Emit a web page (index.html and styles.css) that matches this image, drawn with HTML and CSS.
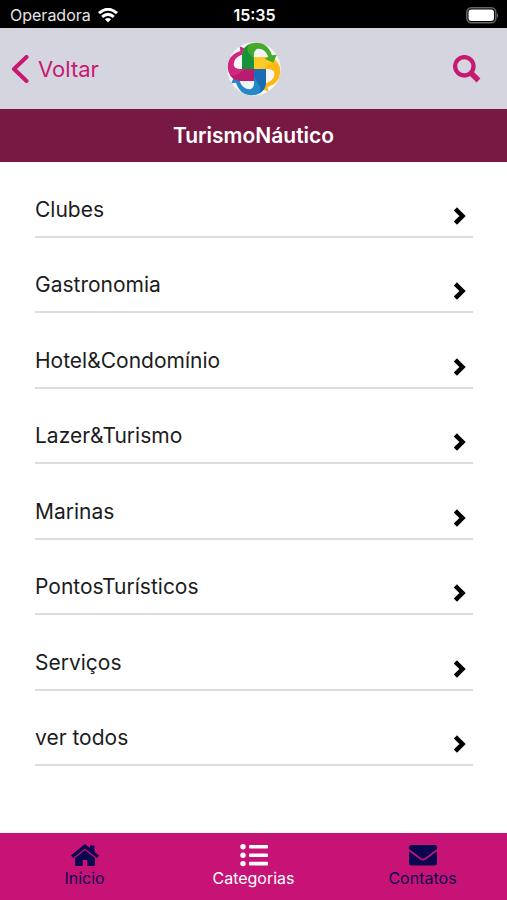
FILE: index.html
```html
<!DOCTYPE html>
<html lang="pt-BR">
<head>
<meta charset="utf-8">
<meta name="viewport" content="width=device-width, initial-scale=1">
<title>TurismoNáutico</title>
<link rel="stylesheet" href="styles.css">
</head>
<body>
<div class="status">
  <div class="carrier">Operadora
    <svg width="20" height="15" viewBox="0 0 20 15" fill="none" stroke="#fff" stroke-width="3" aria-hidden="true"><path d="M1 5.200Q10-2.600 19 5.200"/><path d="M4.200 8.800Q10 4 15.800 8.800"/><path d="M6.900 11.200Q10 8.800 13.100 11.200L10 14.500Z" fill="#fff" stroke="none"/></svg>
  </div>
  <time>15:35</time>
  <svg class="battery" width="33" height="17" viewBox="0 0 33 17" aria-hidden="true"><rect x=".8" y=".8" width="29" height="15" rx="4.500" fill="none" stroke="#666" stroke-width="1.500"/><rect x="2.500" y="2.500" width="25.500" height="11.500" rx="3" fill="#fff"/><path d="M31 6q2 2.500 0 5z" fill="#777"/></svg>
</div>
<header class="header">
  <a class="back" href="#">
    <svg width="18" height="28" viewBox="0 0 18 28" fill="none" stroke="currentColor" stroke-width="4" stroke-linecap="round" stroke-linejoin="round" aria-hidden="true"><path d="M15.500 2 3 14l12.500 12"/></svg>
    Voltar
  </a>
  <svg class="logo" width="56" height="56" viewBox="33 30 168 168" aria-hidden="true">
    <defs>
      <path id="swirl" d="M81 114V76Q80 46 110 37 156 28 171 73L185 71 175 95 149 83 160 77Q150 52 129 53 115 56 117 78V114Z"/>
      <path id="fold" d="M81 114V76Q82 52 102 41 92 56 104 70 117 84 117 95V114Z"/>
    </defs>
    <circle cx="117" cy="114" r="80" fill="#f6f5f7"/>
    <use href="#swirl" fill="#fdb813" transform="rotate(90 117 114)"/>
    <use href="#fold" fill="#ffc928" transform="rotate(90 117 114)"/>
    <use href="#swirl" fill="#2589c9" transform="rotate(180 117 114)"/>
    <use href="#fold" fill="#1a6db5" transform="rotate(180 117 114)"/>
    <use href="#swirl" fill="#d0267f" transform="rotate(270 117 114)"/>
    <use href="#fold" fill="#b81c70" transform="rotate(270 117 114)"/>
    <use href="#swirl" fill="#45aa2c"/>
    <use href="#fold" fill="#16923a"/>
  </svg>
  <button class="search" type="button" aria-label="Buscar">
    <svg width="28" height="28" viewBox="0 0 28 28" fill="none" stroke="currentColor" aria-hidden="true"><circle cx="11.300" cy="11.300" r="9.200" stroke-width="4.300"/><path d="m18 18 7.500 7.500" stroke-width="5.500"/></svg>
  </button>
</header>
<h1 class="title">TurismoNáutico</h1>
<svg class="defs" width="0" height="0" aria-hidden="true"><symbol id="chevron" viewBox="0 0 12 18"><path d="M3 3.500 8.500 9 3 14.500" fill="none" stroke="#000" stroke-width="4.500" stroke-linecap="square"/></symbol></svg>
<main class="list">
  <a class="item" href="#">Clubes<svg class="chevron"><use href="#chevron"/></svg></a>
  <a class="item" href="#">Gastronomia<svg class="chevron"><use href="#chevron"/></svg></a>
  <a class="item" href="#">Hotel&amp;Condomínio<svg class="chevron"><use href="#chevron"/></svg></a>
  <a class="item" href="#">Lazer&amp;Turismo<svg class="chevron"><use href="#chevron"/></svg></a>
  <a class="item" href="#">Marinas<svg class="chevron"><use href="#chevron"/></svg></a>
  <a class="item" href="#">PontosTurísticos<svg class="chevron"><use href="#chevron"/></svg></a>
  <a class="item" href="#">Serviços<svg class="chevron"><use href="#chevron"/></svg></a>
  <a class="item" href="#">ver todos<svg class="chevron"><use href="#chevron"/></svg></a>
</main>
<nav class="tabs">
  <a class="tab" href="#">
    <svg width="28" height="24" viewBox="0 0 28 24" fill="currentColor" aria-hidden="true"><path d="M14 1 19 5V2.500h4.500V9L28 12.500l-2 2.500L14 5.400 2 15 0 12.500Z"/><path d="M14 7 24 15V22q0 1-1 1H16.300V17h-4.600V23H5q-1 0-1-1V15Z"/></svg>
    Início
  </a>
  <a class="tab active" href="#" aria-current="page">
    <svg width="28" height="24" viewBox="0 0 28 24" fill="currentColor" aria-hidden="true"><circle cx="3" cy="3.800" r="2.700"/><circle cx="3" cy="12.200" r="2.700"/><circle cx="3" cy="20.600" r="2.700"/><rect x="9" y="2" width="19" height="3.600" rx="1"/><rect x="9" y="10.400" width="19" height="3.600" rx="1"/><rect x="9" y="18.800" width="19" height="3.600" rx="1"/></svg>
    Categorias
  </a>
  <a class="tab" href="#">
    <svg width="28" height="24" viewBox="0 0 28 24" fill="currentColor" aria-hidden="true"><path d="M2.500 2h23Q28 2 28 4.500V6L16 15q-2 1.500-4 0L0 6V4.500Q0 2 2.500 2Z"/><path d="M0 8.300 11.500 16.800q2.500 1.500 5 0L28 8.300V20q0 2.500-2.500 2.500h-23Q0 22.500 0 20Z"/></svg>
    Contatos
  </a>
</nav>
</body>
</html>
```
FILE: styles.css
```css
* {
  box-sizing: border-box;
}

body {
  margin: 0;
  min-height: 100vh;
  display: flex;
  flex-direction: column;
  background: #fff;
  color: #1c1c1e;
  font-family: Inter, "Liberation Sans", sans-serif;
}

a {
  color: inherit;
  text-decoration: none;
}

.status {
  display: grid;
  grid-template-columns: 1fr auto 1fr;
  align-items: center;
  height: 28px;
  padding: 2px 8px 0 10px;
  background: #000;
  color: #fff;
  font-size: 16px;
}

.carrier {
  display: flex;
  align-items: center;
  gap: 7px;
  color: #e4e4e4;
}

.status time {
  font-weight: 600;
}

.battery {
  justify-self: end;
}

.header {
  display: grid;
  grid-template-columns: 1fr auto 1fr;
  align-items: center;
  height: 81px;
  padding: 0 11px;
  background: #d5d5df;
  color: #c71972;
}

.back {
  display: flex;
  align-items: center;
  gap: 9px;
  font-size: 22px;
}

.search {
  justify-self: end;
  display: flex;
  margin-right: 15px;
  padding: 0;
  border: 0;
  background: none;
  color: inherit;
}

.title {
  margin: 0;
  padding: 13px 0 12px;
  background: #781943;
  color: #fff;
  font-size: 21px;
  line-height: 28px;
  font-weight: 600;
  text-align: center;
}

.defs {
  position: absolute;
}

.list {
  flex: 1;
  display: flex;
  flex-direction: column;
  padding: 0 34px 67px 35px;
}

.item {
  flex: 1;
  display: flex;
  align-items: flex-end;
  justify-content: space-between;
  padding-bottom: 11px;
  border-bottom: 2px solid #dcdcdc;
  font-size: 21px;
  line-height: 30px;
}

.chevron {
  width: 12px;
  height: 18px;
  margin-right: 7px;
}

.tabs {
  display: grid;
  grid-template-columns: repeat(3, 1fr);
  height: 67px;
  background: #c71375;
  color: #0b0650;
}

.tab {
  display: flex;
  flex-direction: column;
  align-items: center;
  gap: 1px;
  padding-top: 10px;
  font-size: 16px;
  line-height: 20px;
}

.active {
  color: #fff;
}
```
